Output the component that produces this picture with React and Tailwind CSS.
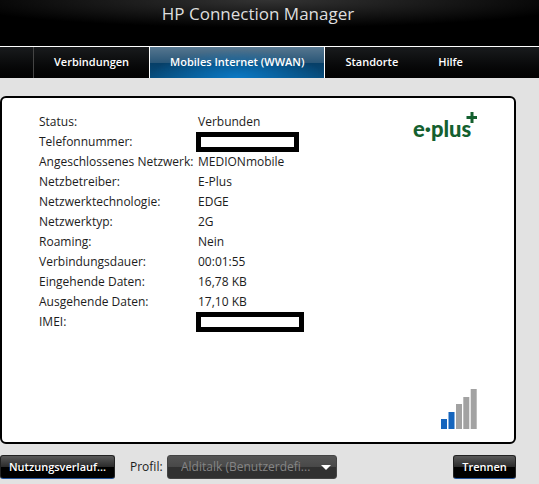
import clsx from "clsx";

const tabs = [
  { name: "Verbindungen", href: "#verbindungen" },
  { name: "Mobiles Internet (WWAN)", href: "#wwan", active: true },
  { name: "Standorte", href: "#standorte" },
  { name: "Hilfe", href: "#hilfe" },
];

const details = [
  { label: "Status:", value: "Verbunden" },
  { label: "Telefonnummer:", hidden: "w-[103px]" },
  { label: "Angeschlossenes Netzwerk:", value: "MEDIONmobile" },
  { label: "Netzbetreiber:", value: "E-Plus" },
  { label: "Netzwerktechnologie:", value: "EDGE" },
  { label: "Netzwerktyp:", value: "2G" },
  { label: "Roaming:", value: "Nein" },
  { label: "Verbindungsdauer:", value: "00:01:55" },
  { label: "Eingehende Daten:", value: "16,78 KB" },
  { label: "Ausgehende Daten:", value: "17,10 KB" },
  { label: "IMEI:", hidden: "w-[108px]" },
];

function Header() {
  return (
    <header className="h-[46px] bg-black bg-[radial-gradient(ellipse_60%_60%_at_50%_0%,#333333,#000000)] pr-[23px] pt-0.5 text-center">
      <h1 className="text-[17px] leading-6 text-[#dedede]">HP Connection Manager</h1>
    </header>
  );
}

function TabBar() {
  return (
    <nav className="flex h-8 border-t border-white bg-linear-to-b from-[#191b1d] to-[#020202] pl-[33px] text-[11px] font-semibold text-white">
      {tabs.map((tab, i) => (
        <a
          key={tab.name}
          href={tab.href}
          className={clsx(
            "flex items-center px-5 whitespace-nowrap",
            i === 0 && "border-l border-[#444444]",
            tab.active &&
              "border-x border-white bg-[radial-gradient(ellipse_50%_90%_at_50%_100%,#0a78c4,transparent),linear-gradient(to_bottom,#56768f,#2a5778_50%,#063e66_50%,#074d7d)]"
          )}
        >
          {tab.name}
        </a>
      ))}
    </nav>
  );
}

function ProviderLogo() {
  return (
    <svg width="65" height="34" viewBox="0 0 65 34" role="img" aria-label="e-plus" className="text-[#14602f]">
      <text x="1" y="25" fontSize="22" fontWeight="900" fill="currentColor" fontFamily="Lato, 'Open Sans', sans-serif">
        e·plus
      </text>
      <path d="M60 0v11M54.500 5.500h11" stroke="currentColor" strokeWidth="3" />
    </svg>
  );
}

function SignalBars() {
  return (
    <svg width="36" height="40" viewBox="0 0 36 40" role="img" aria-label="Signal">
      <path d="M0 30h6v10H0zM7.500 23h6v17h-6z" fill="#1565bd" />
      <path d="M15 15h6v25h-6zM22.300 8h6v32h-6zM29.700 0h6v40h-6z" fill="#a2a2a2" />
    </svg>
  );
}

function Button({ children, className }) {
  return (
    <button
      type="button"
      className={clsx(
        "h-6 rounded-[3px] border border-[#222222] border-b-[#24539a] bg-linear-to-b from-[#5a5a5a] via-[#2b2b2b] via-50% to-black to-50% text-[11px] font-semibold whitespace-nowrap text-white",
        className
      )}
    >
      {children}
    </button>
  );
}

export default function App() {
  return (
    <div className="min-h-screen bg-[#e2e2e2] font-['Open_Sans','Noto_Sans',sans-serif] text-[12px] text-[#1c1c1c]">
      <Header />
      <TabBar />
      <main className="pt-[18px] pr-[23px]">
        <section className="flex flex-col rounded-md border-2 border-black bg-white pt-3.5 pr-[37px] pb-[13px] pl-[37px]">
          <div className="flex items-start justify-between">
            <dl>
              {details.map((item) => (
                <div key={item.label} className="flex h-5 items-center">
                  <dt className="w-[157px] whitespace-nowrap">{item.label}</dt>
                  <dd>
                    {item.hidden ? (
                      <div className={clsx("h-5 border-5 border-black bg-white", item.hidden)} />
                    ) : (
                      <span className="pl-0.5">{item.value}</span>
                    )}
                  </dd>
                </div>
              ))}
            </dl>
            <ProviderLogo />
          </div>
          <div className="mt-[57px] flex justify-end">
            <SignalBars />
          </div>
        </section>

        <div className="flex items-center pt-[11px]">
          <Button className="w-[115px]">Nutzungsverlauf...</Button>
          <label htmlFor="profile" className="w-[52px] pl-[15px]">
            Profil:
          </label>
          <div className="relative w-[170px]">
            <select
              id="profile"
              disabled
              className="block h-6 w-full appearance-none rounded-[3px] border border-[#444444] bg-linear-to-b from-[#555555] via-[#484848] via-50% to-[#303030] to-50% pl-[13px] text-[12px] text-[#858585] opacity-100"
            >
              <option>Alditalk (Benutzerdefi...</option>
            </select>
            <svg width="10" height="5" viewBox="0 0 10 5" className="pointer-events-none absolute top-2.5 right-1.5">
              <path d="M0 0h10L5 5z" fill="#ffffff" />
            </svg>
          </div>
          <Button className="ml-auto w-[63px]">Trennen</Button>
        </div>
      </main>
    </div>
  );
}
